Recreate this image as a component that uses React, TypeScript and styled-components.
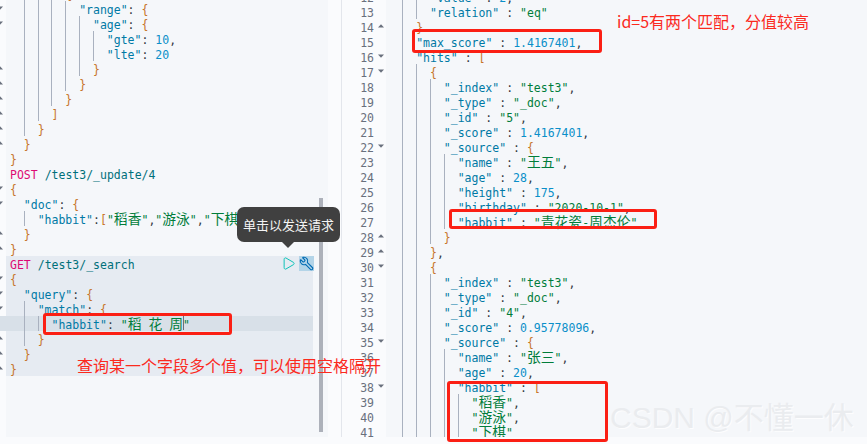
import React from "react";
import styled, { createGlobalStyle } from "styled-components";
import { Play, Wrench } from "lucide-react";

const Global = createGlobalStyle`
  html, body { margin: 0; padding: 0; background: #fafbfd; }
  #root { width: 867px; height: 444px; overflow: hidden; }
`;

const Page = styled.div`
  position: relative;
  display: flex;
  width: 867px;
  height: 444px;
  overflow: hidden;
  background: #fafbfd;
  font-family: "DejaVu Sans Mono", "Noto Sans CJK SC", monospace;
  font-size: 11.5px;
`;

const LeftPane = styled.section`
  display: flex;
  flex: none;
  width: 341px;
  height: 437px;
  overflow: hidden;
  border-right: 1px solid #e3e6ec;
`;

const LeftEditor = styled.div`
  flex: none;
  width: 328px;
  height: 437px;
  display: flex;
  overflow: hidden;
  background: linear-gradient(to right, #fafbfd 6px, #f5f7fa 6px);
`;

const LeftLines = styled.div`
  flex: none;
  width: 313px;
  margin-top: -14px;
`;

const ScrollThumb = styled.div`
  flex: none;
  width: 4px;
  height: 234px;
  margin: 198px 0 0 6px;
  background: #adb1ba;
`;

const RightPane = styled.section`
  flex: 1;
  height: 437px;
  overflow: hidden;
  background: linear-gradient(to right, #fafbfd 44px, #f5f7fa 44px);
`;

const RightLines = styled.div`
  margin-top: -11px;
`;

const LeftRow = styled.div<{ $tone?: "block" | "current" }>`
  display: flex;
  height: 15px;
  line-height: 19px;
  background: ${(p) => (p.$tone === "current" ? "#d8e0e8" : p.$tone === "block" ? "#e6ebf2" : "transparent")};
`;

const LeftGutter = styled.div<{ $tone?: "block" | "current" }>`
  flex: none;
  width: 6px;
  height: 15px;
  overflow: hidden;
  background: ${(p) => (p.$tone === "current" ? "#d8e0e8" : "#fafbfd")};
  svg { margin: 5px 0 0 -3px; display: block; }
`;

const Code = styled.div`
  flex: 1;
  min-width: 0;
  display: flex;
  height: 15px;
  padding-left: 4px;
  white-space: pre;
`;

const RightRow = styled.div`
  display: flex;
  height: 15px;
  line-height: 19px;
`;

const LineNo = styled.div`
  flex: none;
  width: 32px;
  text-align: right;
  color: #69707d;
`;

const FoldSlot = styled.div`
  flex: none;
  width: 14.5px;
  svg { margin: 5px 0 0 4px; display: block; }
`;

const RightCode = styled(Code)`
  padding-left: 0;
`;

const Indent = styled.span<{ $guide: boolean }>`
  flex: none;
  box-sizing: border-box;
  width: 13.84px;
  height: 15px;
  border-left: 1px solid ${(p) => (p.$guide ? "#a9b1bf" : "transparent")};
`;

const Key = styled.span`color: #0079a5;`;
const Str = styled.span`color: #017d3a;`;
const Num = styled.span`color: #0a8fc9;`;
const Brace = styled.span`color: #c7752b;`;
const Punct = styled.span`color: #343741;`;
const Method = styled.span`color: #dd0a73;`;
const PathText = styled.span`color: #00707a;`;
const Han = styled.span`font-size: 13.8px; font-family: "Noto Sans CJK SC", sans-serif; line-height: 15px;`;
const Caret = styled.span`
  display: inline-block;
  width: 1px;
  height: 14px;
  margin-right: -1px;
  vertical-align: top;
  background: #69707d;
`;

const RedBox = styled.div<{ $x: number; $y: number; $w: number; $h: number }>`
  position: absolute;
  box-sizing: border-box;
  left: ${(p) => p.$x}px;
  top: ${(p) => p.$y}px;
  width: ${(p) => p.$w}px;
  height: ${(p) => p.$h}px;
  border: 3px solid #fb1f14;
  border-radius: 3px;
`;

const NoteTop = styled.div`
  position: absolute;
  left: 617px;
  top: 10px;
  font: 16px/22px "Noto Sans CJK SC", sans-serif;
  color: #fb2a1e;
  white-space: nowrap;
`;

const NoteBottom = styled.div`
  position: absolute;
  left: 77px;
  top: 353px;
  font: 16px/24px "Noto Sans CJK SC", sans-serif;
  color: #fb2a1e;
  white-space: nowrap;
`;

const Tooltip = styled.div`
  position: absolute;
  left: 237px;
  top: 207px;
  width: 103px;
  height: 35px;
  border-radius: 7px;
  background: #404040;
  color: #f4f4f4;
  font: 13px/35px "Noto Sans CJK SC", sans-serif;
  text-align: center;
  &::after {
    content: "";
    position: absolute;
    left: 45px;
    top: 35px;
    border: 6px solid transparent;
    border-bottom: 0;
    border-top-color: #404040;
  }
`;

const PlayButton = styled.div`
  position: absolute;
  left: 281px;
  top: 256px;
  display: flex;
  color: #00bfb3;
`;

const WrenchButton = styled.div`
  position: absolute;
  left: 299px;
  top: 256px;
  width: 15px;
  height: 15px;
  display: flex;
  background: #b3d4e8;
  color: #006bb4;
  svg { transform: scaleX(-1); }
`;

const Watermark = styled.div`
  position: absolute;
  left: 610px;
  top: 400px;
  font: 30px/36px "Liberation Sans", "Noto Sans CJK SC", sans-serif;
  color: #eaecef;
  text-shadow: 1px 1px 0 #fdfdfe;
  white-space: nowrap;
`;

const Fold = ({ dir }: { dir?: "u" | "d" }) =>
  dir ? (
    <svg width="6" height="4" viewBox="0 0 6 4">
      <polygon points={dir === "d" ? "0,0.5 6,0.5 3,3.8" : "0,3.5 6,3.5 3,0.2"} fill="#69707d" />
    </svg>
  ) : null;

const hanRe = /([\u4e00-\u9fff]+)/;

const StringText = ({ text, Comp }: { text: string; Comp: typeof Str }) => (
  <Comp>
    {text.split(hanRe).map((part, i) =>
      hanRe.test(part) ? <Han key={i}>{part}</Han> : part
    )}
  </Comp>
);

function tokens(text: string, caret?: boolean) {
  const out: React.ReactNode[] = [];
  const re = /"[^"]*"(\s*:)?|"[^"]*$|-?\d+(\.\d+)?|[{}\[\]]|\s+|[:,]/g;
  let m: RegExpExecArray | null;
  let i = 0;
  while ((m = re.exec(text))) {
    const t = m[0];
    if (t.startsWith('"')) {
      if (m[1]) {
        const k = t.slice(0, t.length - m[1].length);
        out.push(<Key key={i++}>{k}</Key>);
        out.push(<Punct key={i++}>{m[1]}</Punct>);
      } else if (caret) {
        const body = t.slice(0, -1);
        out.push(<StringText key={i++} text={body} Comp={Str} />);
        out.push(<Caret key={i++} />);
        out.push(<Str key={i++}>"</Str>);
      } else {
        out.push(<StringText key={i++} text={t} Comp={Str} />);
      }
    } else if (/^-?\d/.test(t)) out.push(<Num key={i++}>{t}</Num>);
    else if (/[{}\[\]]/.test(t)) out.push(<Brace key={i++}>{t}</Brace>);
    else out.push(<Punct key={i++}>{t}</Punct>);
  }
  return out;
}

const Indents = ({ level }: { level: number }) => (
  <>
    {Array.from({ length: level }, (_, i) => (
      <Indent key={i} $guide={i > 0} />
    ))}
  </>
);

type L = [number, string, ("u" | "d")?];
type Req = { method: string; path: string };

const leftTop: (L | Req)[] = [
  [4, "{"],
  [5, '"range": {', "d"],
  [6, '"age": {', "d"],
  [7, '"gte": 10,'],
  [7, '"lte": 20'],
  [6, "}", "u"],
  [5, "}", "u"],
  [4, "}", "u"],
  [3, "]", "u"],
  [2, "}", "u"],
  [1, "}", "u"],
  [0, "}"],
  { method: "POST", path: " /test3/_update/4" },
  [0, "{", "d"],
  [1, '"doc": {', "d"],
  [2, '"habbit":["稻香","游泳","下棋"]'],
  [1, "}", "u"],
  [0, "}", "u"],
];

const leftBlock: (L | Req)[] = [
  { method: "GET", path: " /test3/_search" },
  [0, "{", "d"],
  [1, '"query": {', "d"],
  [2, '"match": {', "d"],
  [3, '"habbit": "稻 花 周"'],
  [2, "}", "u"],
  [1, "}", "u"],
  [0, "}", "u"],
];

const hit = (id: string, score: string): L[] => [
  [4, '"_index" : "test3",'],
  [4, '"_type" : "_doc",'],
  [4, `"_id" : "${id}",`],
  [4, `"_score" : ${score},`],
  [4, '"_source" : {', "d"],
];

const right: L[] = [
  [3, '"value" : 2,'],
  [3, '"relation" : "eq"'],
  [2, "}", "u"],
  [2, '"max_score" : 1.4167401,'],
  [2, '"hits" : [', "d"],
  [3, "{", "d"],
  ...hit("5", "1.4167401"),
  [5, '"name" : "王五",'],
  [5, '"age" : 28,'],
  [5, '"height" : 175,'],
  [5, '"birthday" : "2020-10-1",'],
  [5, '"habbit" : "青花瓷-周杰伦"'],
  [4, "}", "u"],
  [3, "},", "u"],
  [3, "{", "d"],
  ...hit("4", "0.95778096"),
  [5, '"name" : "张三",'],
  [5, '"age" : 20,'],
  [5, '"habbit" : [', "d"],
  [6, '"稻香",'],
  [6, '"游泳",'],
  [6, '"下棋"'],
];

const renderLeft = (l: L | Req, key: number, tone?: "block" | "current") => {
  if (Array.isArray(l)) {
    const current = tone === "block" && l[1].includes("稻 花 周");
    const rowTone = current ? "current" : tone;
    return (
      <LeftRow key={key} $tone={rowTone}>
        <LeftGutter $tone={rowTone}><Fold dir={l[2]} /></LeftGutter>
        <Code>
          <Indents level={l[0]} />
          <span>{tokens(l[1], current)}</span>
        </Code>
      </LeftRow>
    );
  }
  return (
    <LeftRow key={key} $tone={tone}>
      <LeftGutter $tone={tone} />
      <Code>
        <Method>{l.method}</Method>
        <PathText>{l.path}</PathText>
      </Code>
    </LeftRow>
  );
};

export default function App() {
  return (
    <Page>
      <Global />
      <LeftPane>
        <LeftEditor>
          <LeftLines>
            {leftTop.map((l, i) => renderLeft(l, i))}
            {leftBlock.map((l, i) => renderLeft(l, i, "block"))}
          </LeftLines>
          <ScrollThumb />
        </LeftEditor>
      </LeftPane>
      <RightPane>
        <RightLines>
          {right.map((l, i) => (
            <RightRow key={i}>
              <LineNo>{i + 12}</LineNo>
              <FoldSlot><Fold dir={l[2]} /></FoldSlot>
              <RightCode>
                <Indents level={l[0]} />
                <span>{tokens(l[1])}</span>
              </RightCode>
            </RightRow>
          ))}
        </RightLines>
      </RightPane>

      <PlayButton><Play size={15} strokeWidth={1.5} /></PlayButton>
      <WrenchButton><Wrench size={15} strokeWidth={1.8} /></WrenchButton>
      <Tooltip>单击以发送请求</Tooltip>

      <RedBox $x={412} $y={29} $w={190} $h={24} />
      <RedBox $x={449} $y={209} $w={208} $h={20} />
      <RedBox $x={447} $y={381} $w={161} $h={61} />
      <RedBox $x={43} $y={313} $w={189} $h={22} />
      <NoteTop>id=5有两个匹配，分值较高</NoteTop>
      <NoteBottom>查询某一个字段多个值，可以使用空格隔开</NoteBottom>
      <Watermark>CSDN @不懂一休</Watermark>
    </Page>
  );
}
